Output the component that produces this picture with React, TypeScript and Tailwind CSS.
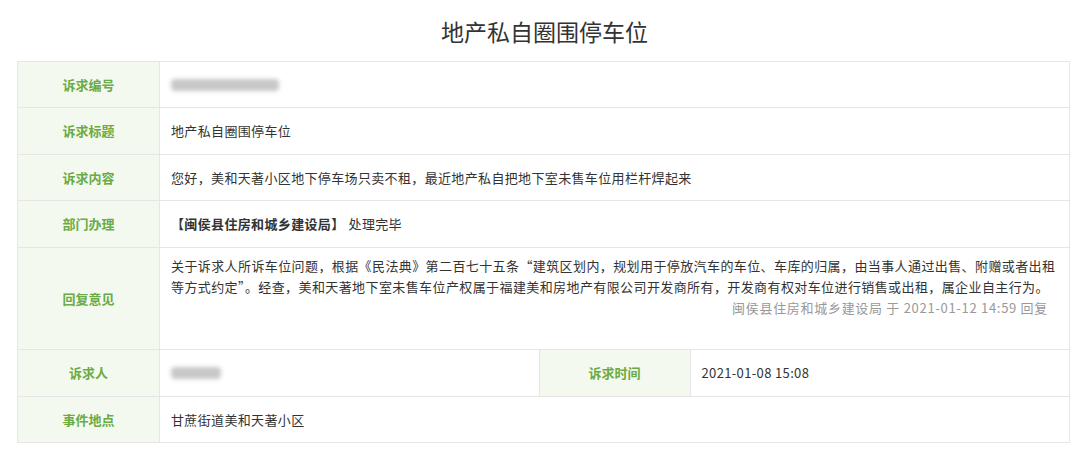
import React from 'react'

const Label: React.FC<{ children: React.ReactNode; wide?: boolean }> = ({ children, wide }) => (
  <div
    className={`${wide ? 'w-[151px]' : 'w-[142px]'} shrink-0 flex items-center justify-center bg-[#f4f9ef] border-r border-[#e6e6e6] text-[13px] font-bold text-[#6aab45]`}
  >
    {children}
  </div>
)

const Value: React.FC<{ children?: React.ReactNode; className?: string }> = ({ children, className }) => (
  <div className={`flex-1 flex items-center px-[11px] text-[13px] tracking-[0.35px] text-[#333] ${className ?? ''}`}>
    {children}
  </div>
)

const Blur: React.FC<{ w: string }> = ({ w }) => (
  <div className={`${w} h-[12px] bg-[#c8c8c8] blur-[2px] rounded-sm`} />
)

export default function App() {
  return (
    <div
      className="w-[1080px] h-[450px] bg-white"
      style={{ fontFamily: '"Noto Sans CJK SC", "Noto Sans", sans-serif' }}
    >
      <h1 className="h-[61px] pt-[16px] pl-[9px] text-center text-[23px] leading-[30px] text-[#333] font-normal">
        地产私自圈围停车位
      </h1>
      <div className="mx-[17px] w-[1053px] border border-[#e6e6e6]">
        <div className="flex h-[46px] border-b border-[#e6e6e6]">
          <Label>诉求编号</Label>
          <Value>
            <Blur w="w-[108px]" />
          </Value>
        </div>
        <div className="flex h-[47px] border-b border-[#e6e6e6]">
          <Label>诉求标题</Label>
          <Value>地产私自圈围停车位</Value>
        </div>
        <div className="flex h-[46px] border-b border-[#e6e6e6]">
          <Label>诉求内容</Label>
          <Value>您好，美和天著小区地下停车场只卖不租，最近地产私自把地下室未售车位用栏杆焊起来</Value>
        </div>
        <div className="flex h-[47px] border-b border-[#e6e6e6]">
          <Label>部门办理</Label>
          <Value>
            <span className="font-bold">【闽侯县住房和城乡建设局】</span>
            <span className="ml-[4px]">处理完毕</span>
          </Value>
        </div>
        <div className="flex h-[102px] border-b border-[#e6e6e6]">
          <Label>回复意见</Label>
          <div className="flex-1 px-[11px] pt-[7px] text-[13px] leading-[21px] text-[#333] tracking-[0.4px]">
            <p className="whitespace-nowrap">
              关于诉求人所诉车位问题，根据《民法典》第二百七十五条“建筑区划内，规划用于停放汽车的车位、车库的归属，由当事人通过出售、附赠或者出租
            </p>
            <p className="whitespace-nowrap">
              等方式约定”。经查，美和天著地下室未售车位产权属于福建美和房地产有限公司开发商所有，开发商有权对车位进行销售或出租，属企业自主行为。
            </p>
            <p className="text-right text-[#999] tracking-[0.7px] pr-[10px]">闽侯县住房和城乡建设局 于 2021-01-12 14:59 回复</p>
          </div>
        </div>
        <div className="flex h-[47px] border-b border-[#e6e6e6]">
          <Label>诉求人</Label>
          <Value className="border-r border-[#e6e6e6]">
            <Blur w="w-[50px]" />
          </Value>
          <Label wide>诉求时间</Label>
          <Value className="tracking-[0.8px]">2021-01-08 15:08</Value>
        </div>
        <div className="flex h-[45px]">
          <Label>事件地点</Label>
          <Value>甘蔗街道美和天著小区</Value>
        </div>
      </div>
    </div>
  )
}
